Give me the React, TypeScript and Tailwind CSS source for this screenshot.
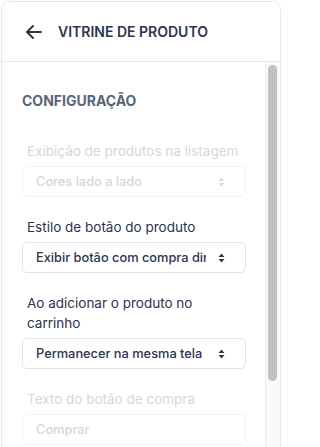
import { ReactNode } from "react";

const SortIcon = ({ className }: { className?: string }) => (
  <svg viewBox="0 0 8 12" className={className} fill="currentColor" aria-hidden>
    <path d="M4 0.5 7.5 4.8H0.5Z" />
    <path d="M4 11.5 0.5 7.2H7.5Z" />
  </svg>
);

const Field = ({
  label,
  value,
  disabled,
  select = true,
}: {
  label: ReactNode;
  value: string;
  disabled?: boolean;
  select?: boolean;
}) => (
  <div className="flex flex-col">
    <label
      className={`mb-[5px] pl-[5px] text-[13.5px] leading-[20px] ${
        disabled ? "text-[#d3d7de]" : "text-[#2b3450]"
      }`}
    >
      {label}
    </label>
    <div
      className={`flex h-[31px] items-center rounded-[5px] border pl-[13px] pr-[20px] ${
        disabled ? "border-[#f1f3f6] text-[#d3d7de]" : "border-[#dfe3ea] text-[#2b3450]"
      }`}
    >
      <span className="min-w-0 flex-1 overflow-hidden whitespace-nowrap text-[12.8px] font-medium">
        {value}
      </span>
      {select && (
        <SortIcon className={`ml-[12px] h-[10px] w-[7px] shrink-0 ${disabled ? "text-[#d7dbe1]" : "text-[#2b3450]"}`} />
      )}
    </div>
  </div>
);

export default function App() {
  return (
    <div className="w-[282px] bg-white p-px" style={{ fontFamily: "Inter, 'Noto Sans', sans-serif" }}>
      <div className="flex h-[470px] flex-col overflow-hidden rounded-t-[9px] border border-[#e5e9ef] bg-white">
        <header className="flex h-[60px] shrink-0 items-center gap-[16px] border-b border-[#e5e9ef] pl-[24px]">
          <svg viewBox="0 0 16 14" className="h-[14px] w-[16px] text-[#2b3450]" fill="none" stroke="currentColor" strokeWidth={1.9} strokeLinecap="round" strokeLinejoin="round">
            <path d="M15 7H1.2" />
            <path d="M7 1 1 7l6 6" />
          </svg>
          <h1 className="text-[14px] font-semibold text-[#2b3450]">VITRINE DE PRODUTO</h1>
        </header>
        <div className="flex min-h-0 flex-1">
          <div className="min-w-0 flex-1 overflow-hidden">
            <div className="flex flex-col pb-[60px] pl-[20px] pr-[19px] pt-[29px]">
              <h2 className="mb-[30px] text-[14px] font-bold leading-[20px] text-[#5a6479]">CONFIGURAÇÃO</h2>
              <div className="flex flex-col gap-[20px]">
                <Field label="Exibição de produtos na listagem" value="Cores lado a lado" disabled />
                <Field label="Estilo de botão do produto" value="Exibir botão com compra direta" />
                <Field label="Ao adicionar o produto no carrinho" value="Permanecer na mesma tela" />
                <Field label="Texto do botão de compra" value="Comprar" disabled select={false} />
              </div>
            </div>
          </div>
          {/* scrollbar */}
          <div className="w-[15px] shrink-0 border-l border-[#ececec] bg-[#fafafa] pl-[2px] pr-[2px] pt-[3px]">
            <div className="h-[316px] w-[9px] rounded-full bg-[#c1c1c1]" />
          </div>
        </div>
      </div>
    </div>
  );
}
